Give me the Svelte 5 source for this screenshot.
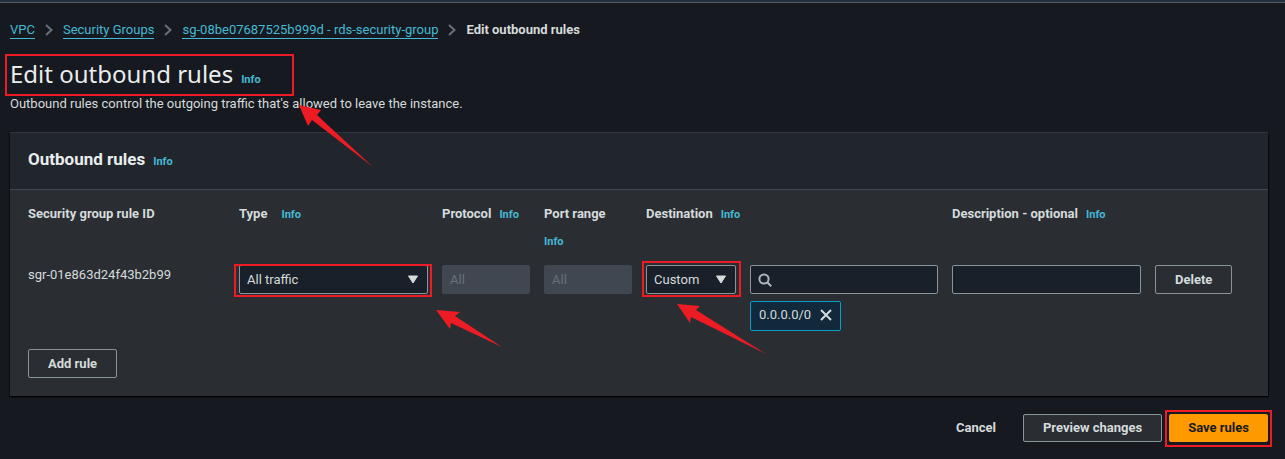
<script>
  let ruleType = $state('All traffic');
  let destinationType = $state('Custom');
  let description = $state('');
  let search = $state('');
  let cidrs = $state(['0.0.0.0/0']);

  const crumbs = ['VPC', 'Security Groups', 'sg-08be07687525b999d - rds-security-group'];
</script>

{#snippet info()}<a class="info" href="#info">Info</a>{/snippet}

{#snippet caret()}
  <svg class="caret" viewBox="0 0 10 8" aria-hidden="true"><path d="M0.5 0.5h9L5 7.5z" fill="currentColor" stroke="currentColor" stroke-linejoin="round" /></svg>
{/snippet}

<div class="topbar"></div>
<main>
  <nav aria-label="Breadcrumbs">
    <ol>
      {#each crumbs as crumb}
        <li>
          <a href="#crumb">{crumb}</a>
          <svg class="chevron" viewBox="0 0 8 12" aria-hidden="true"><path d="M1 1l5.5 5L1 11" fill="none" stroke="currentColor" stroke-width="2" /></svg>
        </li>
      {/each}
      <li aria-current="page">Edit outbound rules</li>
    </ol>
  </nav>

  <header class="title">
    <div class="mark mark-title">
      <h1>Edit outbound rules</h1>
      {@render info()}
      <svg class="arrow arrow-title" viewBox="0 0 76 63" aria-hidden="true"><path d="M0 0l22 5-4 5 56 52-61-47-4 6z" fill="currentColor" /></svg>
    </div>
    <p>Outbound rules control the outgoing traffic that's allowed to leave the instance.</p>
  </header>

  <section class="card">
    <div class="card-head">
      <h2>Outbound rules</h2>
      {@render info()}
    </div>
    <div class="card-body">
      <div class="grid heads">
        <div>Security group rule ID</div>
        <div class="wide"><label for="type">Type</label>{@render info()}</div>
        <div><label for="protocol">Protocol</label>{@render info()}</div>
        <div class="stacked"><label for="port">Port range</label>{@render info()}</div>
        <div><label for="destination">Destination</label>{@render info()}</div>
        <div><label for="description">Description - optional</label>{@render info()}</div>
      </div>
      <div class="grid">
        <div class="rule-id">sgr-01e863d24f43b2b99</div>
        <div class="mark mark-type">
          <select id="type" bind:value={ruleType}>
            <option>All traffic</option>
            <option>Custom TCP</option>
            <option>HTTPS</option>
          </select>
          {@render caret()}
          <svg class="arrow arrow-type" viewBox="0 0 68 39" aria-hidden="true"><path d="M0 0l24 2-5 4 47 31-51-24-1 6z" fill="currentColor" /></svg>
        </div>
        <input id="protocol" value="All" disabled />
        <input id="port" value="All" disabled />
        <div class="destination">
          <div class="mark mark-destination">
            <select id="destination" bind:value={destinationType}>
              <option>Custom</option>
              <option>Anywhere</option>
            </select>
            {@render caret()}
            <svg class="arrow arrow-destination" viewBox="0 0 90 51" aria-hidden="true"><path d="M0 0l23 2-4 4 70 44-75-37-1 6z" fill="currentColor" /></svg>
          </div>
          <div class="search">
            <svg class="lens" viewBox="0 0 14 14" aria-hidden="true"><g fill="none" stroke="currentColor" stroke-width="2"><circle cx="6" cy="6" r="4.6" /><path d="M9.2 9.2l4 4" /></g></svg>
            <input type="search" aria-label="Search destinations" bind:value={search} />
            {#each cidrs as cidr}
              <span class="token">
                {cidr}
                <button class="remove" aria-label="Remove {cidr}" onclick={() => (cidrs = cidrs.filter((c) => c !== cidr))}>
                  <svg viewBox="0 0 12 12" aria-hidden="true"><path d="M1 1l10 10M11 1L1 11" stroke="currentColor" stroke-width="2" /></svg>
                </button>
              </span>
            {/each}
          </div>
        </div>
        <input id="description" bind:value={description} />
        <button class="btn delete">Delete</button>
      </div>
      <button class="btn add">Add rule</button>
    </div>
  </section>

  <footer>
    <button class="btn link">Cancel</button>
    <button class="btn preview">Preview changes</button>
    <div class="mark mark-save"><button class="btn primary">Save rules</button></div>
  </footer>
</main>

<style>
  :global(body) {
    margin: 0;
    background: #16191f;
    color: #d5dbdb;
    font: 13px/20px Roboto, 'Open Sans', sans-serif;
  }
  * { box-sizing: border-box; }
  button, input, select { font: inherit; color: inherit; margin: 0; }
  h1, h2, p, ol { margin: 0; padding: 0; }
  svg { display: block; }

  .topbar { height: 3px; background: #232f3e; border-bottom: 1px solid #545b64; }
  main { padding: 17px 17px 16px 10px; }

  ol { display: flex; list-style: none; }
  li { display: flex; align-items: center; }
  li a { color: #44b9d6; line-height: 17px; text-decoration: none; border-bottom: 1px solid; }
  li[aria-current] { font-weight: 700; }
  .chevron { width: 8px; height: 12px; margin: 0 10px; color: #687078; }

  .info { color: #44b9d6; font-size: 11px; font-weight: 700; text-decoration: none; }

  .title { margin-top: 14px; }
  h1 { font-family: 'Noto Sans', sans-serif; font-size: 24px; line-height: 40px; font-weight: 400; color: #eaeded; }
  .mark { position: relative; }
  .mark::after {
    content: '';
    position: absolute;
    border: 2px solid #ed1c24;
    pointer-events: none;
  }
  .mark-title { display: flex; align-items: baseline; gap: 8px; width: 284px; }
  .mark-title::after { inset: 0 0 -2px -5px; }
  .arrow { position: absolute; z-index: 1; color: #ed1c24; pointer-events: none; }
  .arrow-title { width: 76px; height: 63px; top: 51px; left: 289px; }

  .card {
    margin-top: 18px;
    background: #2a2e33;
    border-top: 1px solid #30343a;
    box-shadow: 0 1px 1px #000a, 1px 1px 1px #0008, -1px 1px 1px #0004;
  }
  .card-head {
    display: flex;
    align-items: baseline;
    gap: 8px;
    padding: 15px 18px 17px;
    background: #21252c;
    border-bottom: 1px solid #414750;
  }
  h2 { font-size: 17px; line-height: 23px; font-weight: 700; color: #eaeded; }
  .card-body { padding: 10px 18px 18px; }
  .grid {
    display: grid;
    grid-template-columns: 197fr 189fr 88fr 88fr 292fr 189fr 95fr;
    gap: 14px;
    align-items: start;
  }
  .grid > * { min-width: 0; }
  .heads { font-weight: 700; line-height: 28px; min-height: 65px; }
  .heads .info { margin-left: 8px; }
  .heads .wide .info { margin-left: 14px; }
  .heads .stacked .info { display: block; margin-left: 0; }

  input, select {
    display: block;
    width: 100%;
    height: 29px;
    padding: 0 7px;
    background: #1a2029;
    border: 1px solid #879596;
    border-radius: 2px;
    appearance: none;
  }
  input:disabled { background: #414750; border-color: #414750; color: #687078; }
  .caret { position: absolute; top: 10px; right: 10px; width: 10px; height: 9px; pointer-events: none; }
  .mark-type::after { inset: -1px -4px -3px -5px; }
  .arrow-type { width: 68px; height: 39px; top: 45px; left: 197px; }
  .arrow-destination { width: 90px; height: 51px; top: 39px; left: 31px; }
  .mark-destination::after { inset: -4px -5px -3px -4px; }

  .destination { display: grid; grid-template-columns: 90fr 188fr; gap: 14px; align-items: start; }
  .search { position: relative; }
  .search input { padding-left: 30px; }
  .lens { position: absolute; top: 8px; left: 8px; width: 14px; height: 14px; color: #aab7b8; }
  .token {
    display: inline-flex;
    align-items: center;
    gap: 9px;
    height: 30px;
    margin-top: 7px;
    padding: 0 8px 2px;
    background: #12293b;
    border: 1px solid #00a1c9;
    border-radius: 2px;
    vertical-align: top;
  }
  .remove { padding: 0; border: 0; background: none; }
  .remove svg { width: 12px; height: 12px; }

  .btn {
    height: 29px;
    padding: 0 19px;
    border: 1px solid #879596;
    border-radius: 2px;
    background: none;
    font-weight: 700;
    white-space: nowrap;
  }
  .delete { justify-self: start; }
  .add { display: block; margin-top: 18px; }
  footer { display: flex; justify-content: flex-end; gap: 7px; margin-top: 18px; }
  footer .btn { display: block; height: 28px; }
  .link { border-color: transparent; }
  .preview { background: #2a2e33; }
  .primary { padding: 0 18px; background: #ff9900; border-color: #ff9900; color: #16191f; }
  .mark-save::after { inset: -4px -4px -5px -4px; }
</style>
